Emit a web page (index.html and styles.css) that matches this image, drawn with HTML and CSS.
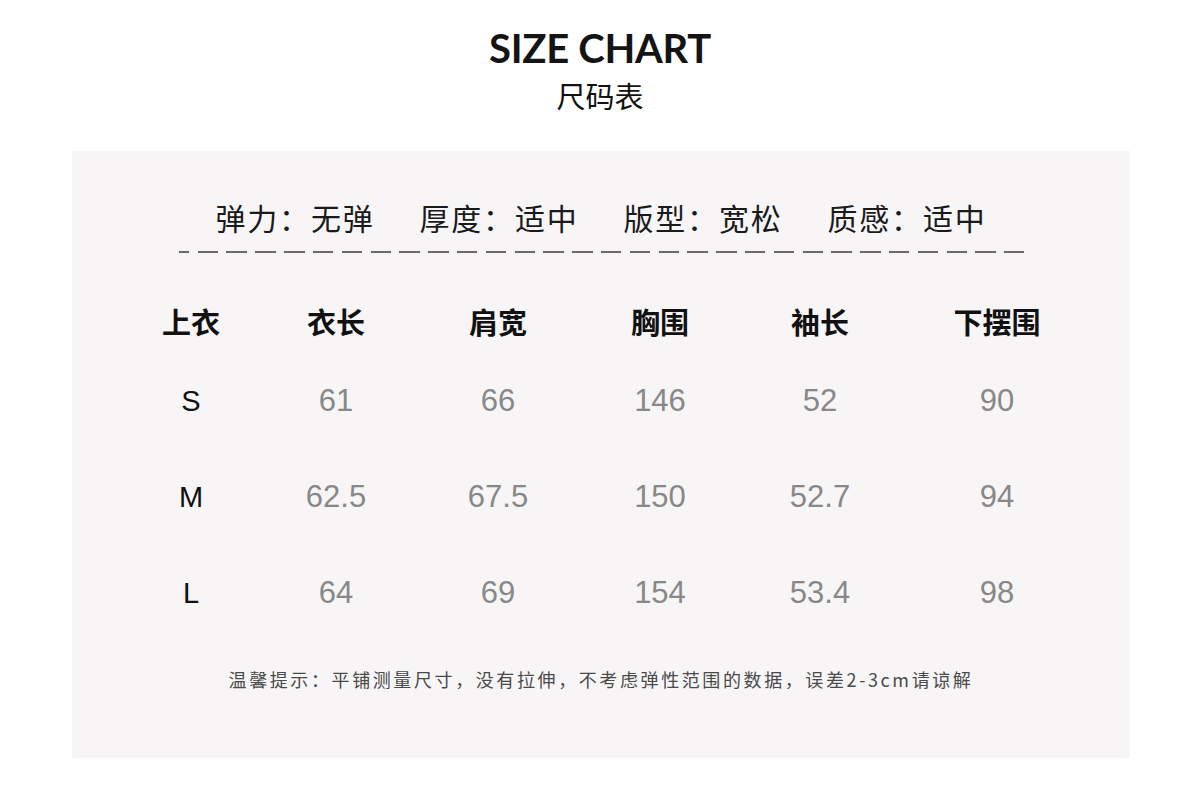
FILE: index.html
```html
<!DOCTYPE html>
<html lang="zh-CN">
<head>
<meta charset="utf-8">
<title>Size Chart</title>
<link rel="stylesheet" href="styles.css">
</head>
<body>
<header class="head">
  <h1 class="title">SIZE CHART</h1>
  <div class="subtitle">尺码表</div>
</header>
<section class="panel">
  <div class="attrs">
    <span class="attr">弹力：无弹</span>
    <span class="attr">厚度：适中</span>
    <span class="attr">版型：宽松</span>
    <span class="attr">质感：适中</span>
  </div>
  <div class="dash"></div>
  <div class="table">
    <div class="row hrow">
      <div class="cell">上衣</div><div class="cell">衣长</div><div class="cell">肩宽</div><div class="cell">胸围</div><div class="cell">袖长</div><div class="cell">下摆围</div>
    </div>
    <div class="row drow">
      <div class="cell size">S</div><div class="cell">61</div><div class="cell">66</div><div class="cell">146</div><div class="cell">52</div><div class="cell">90</div>
    </div>
    <div class="row drow">
      <div class="cell size">M</div><div class="cell">62.5</div><div class="cell">67.5</div><div class="cell">150</div><div class="cell">52.7</div><div class="cell">94</div>
    </div>
    <div class="row drow">
      <div class="cell size">L</div><div class="cell">64</div><div class="cell">69</div><div class="cell">154</div><div class="cell">53.4</div><div class="cell">98</div>
    </div>
  </div>
  <p class="note">温馨提示：平铺测量尺寸，没有拉伸，不考虑弹性范围的数据，误差2-3cm请谅解</p>
</section>
</body>
</html>
```
FILE: styles.css
```css
* { box-sizing: border-box; }
body {
  margin: 0;
  background: #ffffff;
  font-family: "Noto Sans CJK SC", "Noto Sans", sans-serif;
  color: #111;
}
.head {
  text-align: center;
  padding-top: 24px;
}
.title {
  margin: 0;
  font-family: "Lato", "Noto Sans", sans-serif;
  font-weight: 700;
  font-size: 40px;
  line-height: 48px;
  color: #141414;
  letter-spacing: -0.3px;
}
.subtitle {
  font-size: 29px;
  line-height: 36px;
  margin-top: 5px;
  color: #111;
}
.panel {
  margin: 38px 70px 0 72px;
  height: 607px;
  background: #f7f5f6;
  padding-top: 46px;
}
.attrs {
  display: flex;
  justify-content: center;
  gap: 45px;
  font-size: 30px;
  line-height: 40px;
  color: #1a1a1a;
  letter-spacing: 1.8px;
}
.dash {
  width: 845px;
  height: 2px;
  margin: 14px auto 0;
  background-image: repeating-linear-gradient(90deg, #6a6a6a 0, #6a6a6a 10.4px, transparent 10.4px, transparent 18.7px, #6a6a6a 18.7px, #6a6a6a 28.8px);
}
.table {
  margin: 36px 0 0 46px;
}
.row {
  display: grid;
  grid-template-columns: 146px 144px 180px 144px 176px 178px;
  align-items: center;
  text-align: center;
}
.hrow {
  height: 64px;
  font-size: 29px;
  font-weight: 600;
  color: #111;
}
.drow {
  height: 96px;
  font-family: "Liberation Sans", Arial, sans-serif;
  font-size: 31px;
  color: #888;
}
.drow .size {
  color: #111;
  font-size: 29px;
}
.note {
  margin: 26px 0 0;
  text-align: center;
  font-size: 18px;
  line-height: 24px;
  letter-spacing: 2.6px;
  color: #4a4a4a;
}
```
